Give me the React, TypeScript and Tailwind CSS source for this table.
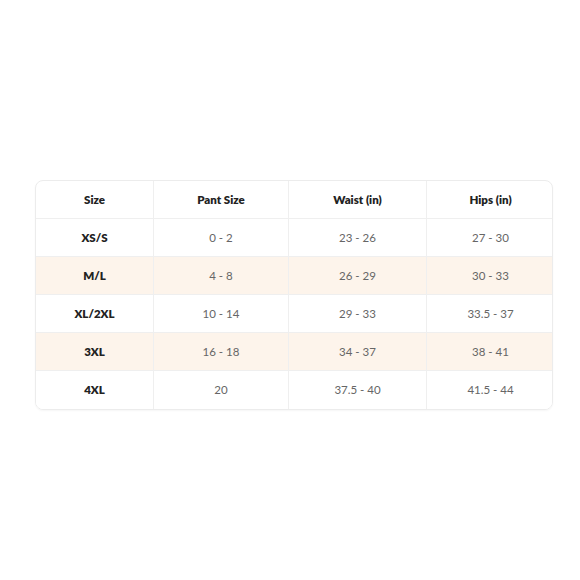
const rows = [
  { size: "XS/S", pant: "0 - 2", waist: "23 - 26", hips: "27 - 30" },
  { size: "M/L", pant: "4 - 8", waist: "26 - 29", hips: "30 - 33" },
  { size: "XL/2XL", pant: "10 - 14", waist: "29 - 33", hips: "33.5 - 37" },
  { size: "3XL", pant: "16 - 18", waist: "34 - 37", hips: "38 - 41" },
  { size: "4XL", pant: "20", waist: "37.5 - 40", hips: "41.5 - 44" },
];

const cols = "grid grid-cols-[118px_135px_138px_127px]";

export default function App() {
  return (
    <div className="w-[580px] h-[580px] bg-white pt-[180px] pl-[35px] font-['Lato',sans-serif]">
      <div className="w-[518px] rounded-lg border border-[#ececec] overflow-hidden shadow-[0_1px_2px_rgba(0,0,0,0.04)]">
        <div className={`${cols} h-[38px] border-b border-[#efefef] text-[11.5px] font-extrabold text-[#222]`}>
          <div className="flex items-center justify-center border-r border-[#efefef]">Size</div>
          <div className="flex items-center justify-center border-r border-[#efefef]">Pant Size</div>
          <div className="flex items-center justify-center border-r border-[#efefef]">Waist (in)</div>
          <div className="flex items-center justify-center">Hips (in)</div>
        </div>
        {rows.map((r, i) => (
          <div
            key={r.size}
            className={`${cols} h-[38px] text-[11.5px] ${i % 2 === 1 ? "bg-[#fdf4eb]" : "bg-white"} ${i < rows.length - 1 ? "border-b border-[#efefef]" : ""}`}
          >
            <div className="flex items-center justify-center border-r border-[#efefef] font-extrabold text-[#222]">{r.size}</div>
            <div className="flex items-center justify-center border-r border-[#efefef] text-[#666]">{r.pant}</div>
            <div className="flex items-center justify-center border-r border-[#efefef] text-[#666]">{r.waist}</div>
            <div className="flex items-center justify-center text-[#666]">{r.hips}</div>
          </div>
        ))}
      </div>
    </div>
  );
}
